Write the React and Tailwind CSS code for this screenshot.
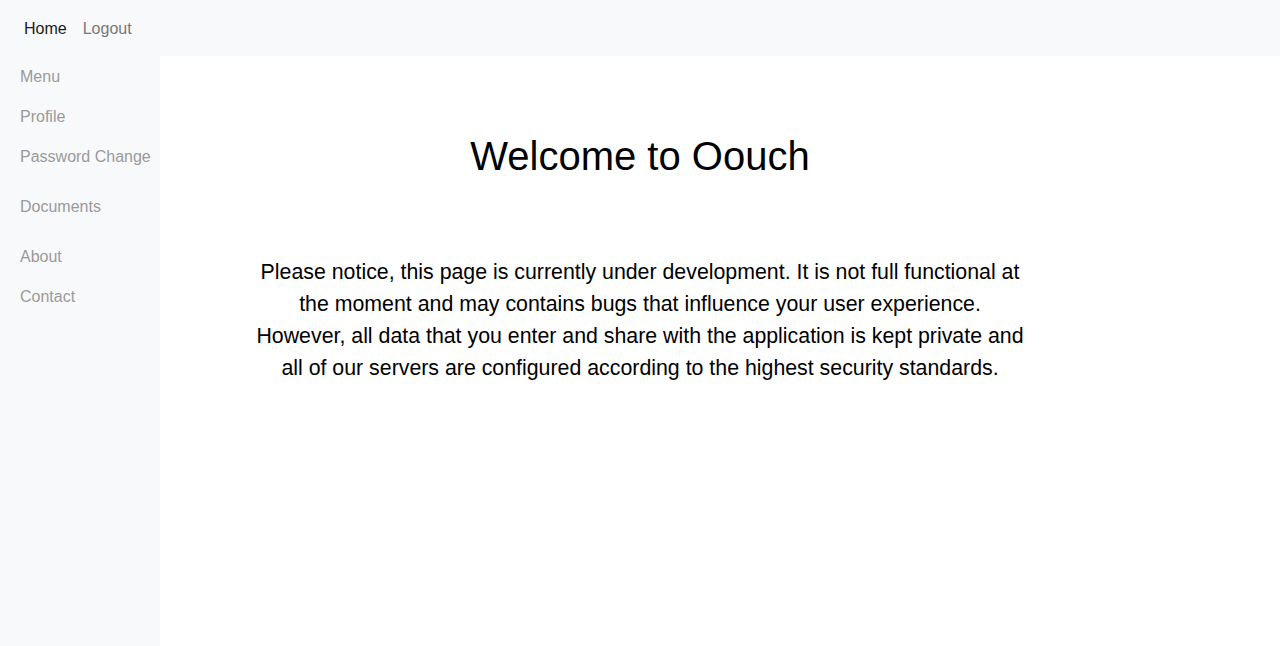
export default function App() {
  const font = { fontFamily: '"Liberation Sans", Arial, sans-serif' };
  return (
    <div className="min-h-[646px] flex flex-col bg-white" style={font}>
      <nav className="h-[56px] bg-[#f8f9fa] flex items-center px-4 pt-[2px] text-[16px] leading-6">
        <a className="px-2 text-[#1a1a1a]">Home</a>
        <a className="px-2 text-[#777777]">Logout</a>
      </nav>
      <div className="flex flex-1">
        <aside className="w-[160px] bg-[#f8f9fa] pt-[1px] min-h-[590px] text-[16px] leading-6 text-[#9a9a9a]">
          <div className="px-5 py-2">Menu</div>
          <div className="px-5 py-2">Profile</div>
          <div className="px-5 py-2 whitespace-nowrap">Password Change</div>
          <div className="px-5 py-2 mt-[10px]">Documents</div>
          <div className="px-5 py-2 mt-[10px]">About</div>
          <div className="px-5 py-2">Contact</div>
        </aside>
        <main className="flex-1 pr-[160px] flex flex-col items-center">
          <h1 className="mt-[76px] text-[40px] leading-[48px] text-black">Welcome to Oouch</h1>
          <p className="mt-[76px] w-[770px] text-center text-[21.33px] leading-8 text-black">
            Please notice, this page is currently under development. It is not full functional at the moment and may contains bugs that influence your user experience. However, all data that you enter and share with the application is kept private and all of our servers are configured according to the highest security standards.
          </p>
        </main>
      </div>
    </div>
  );
}
